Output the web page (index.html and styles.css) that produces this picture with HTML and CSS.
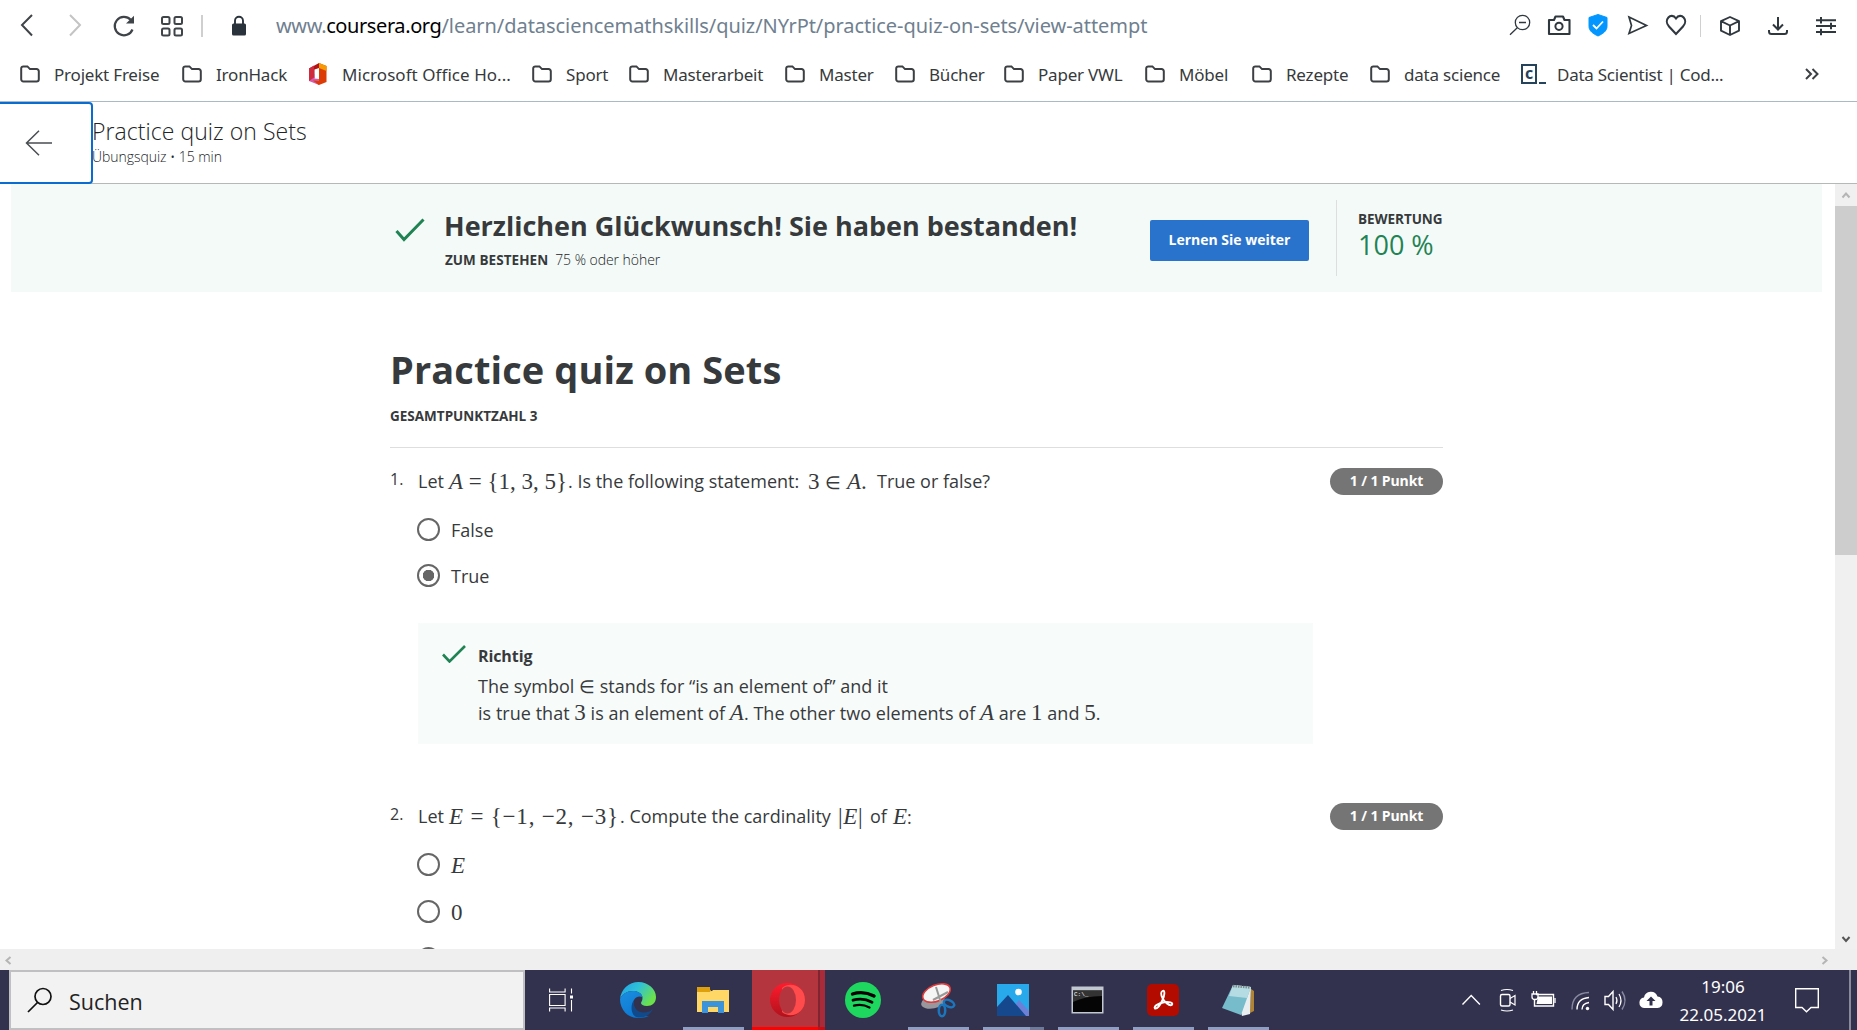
FILE: index.html
```html
<!DOCTYPE html>
<html lang="de">
<head>
<meta charset="utf-8">
<title>Practice quiz on Sets</title>
<link rel="stylesheet" href="styles.css">
</head>
<body>
<svg width="0" height="0" class="defs">
  <defs>
    <symbol id="folder" viewBox="0 0 20 18"><path d="M1.2 3.4a2 2 0 0 1 2-2h4.2l2.6 2.7h6.6a2.2 2.2 0 0 1 2.2 2.2v8a2.2 2.2 0 0 1-2.2 2.2H3.4a2.2 2.2 0 0 1-2.2-2.2z" fill="none" stroke="#3c4043" stroke-width="2"/></symbol>
  </defs>
</svg>

<nav class="toolbar">
  <div class="nav-buttons">
    <svg viewBox="0 0 230 52" width="230" height="52" fill="none" stroke="#3f4448" stroke-width="2">
      <path d="M32 15L22 25l10 10.500"/>
      <path d="M70 15l10 10-10 10.500" stroke="#c4c4c4"/>
      <path d="M132.500 29.500a9.200 9.200 0 1 1-1.800-9.700" stroke-width="2.200"/><path d="M134 15.800v7.800h-8z" fill="#3f4448" stroke="none"/>
      <rect x="162" y="17" width="7.500" height="7" rx="1.500"/><rect x="174.500" y="17" width="7.500" height="7" rx="1.500"/>
      <rect x="162" y="28.500" width="7.500" height="7" rx="1.500"/><rect x="174.500" y="28.500" width="7.500" height="7" rx="1.500"/>
      <path d="M202 15v22" stroke="#cfcfcf"/>
    </svg>
    <svg class="lock" viewBox="0 0 16 20" width="16" height="21"><path d="M4 9V5.200a4 4 0 0 1 8 0V9" fill="none" stroke="#2a333c" stroke-width="1.900"/><rect x="1" y="8" width="14" height="12" rx="1.500" fill="#2a333c"/></svg>
  </div>
  <div class="url"><span>www.</span><span class="host">coursera.org</span><span class="path">/learn/datasciencemathskills/quiz/NYrPt/practice-quiz-on-sets/view-attempt</span></div>
  <svg class="tools" viewBox="1507 0 350 52" width="350" height="52" fill="none" stroke="#30383f" stroke-width="2">
    <g stroke-width="1.300"><circle cx="1522.500" cy="22.500" r="7.200"/><path d="M1517.300 27.700l-7.300 7M1519 22.500h7"/></g>
    <path d="M1549 20h5l1.500-3.500h7.500l1.500 3.500h5v14h-20.500z" stroke-width="2.100" stroke-linejoin="round"/><circle cx="1559" cy="26.300" r="3.600"/>
    <path d="M1598 14.500l9 3v9c0 4.500-4.500 7.500-9 9.500-4.500-2-9-5-9-9.500v-9z" fill="#0496ff" stroke="#0496ff" stroke-width="1"/><path d="M1593 25l3.500 3.500 6.500-7" stroke="#fff" stroke-width="1.800"/>
    <path d="M1629 17l17.500 8.500-17.500 8 2.500-8z" stroke-width="1.700"/>
    <path d="M1676 34l-7-7.500c-6-6.500 2-15 7-8 5-7 13 1.500 7 8z" stroke-width="2.100"/>
    <path d="M1700.500 15v22" stroke="#d0d0d0" stroke-width="1"/>
    <path d="M1730 17l9 4.200v9.500l-9 4.300-9-4.300v-9.500zM1721 21.200l9 4.300 9-4.300M1730 25.500V35" stroke-width="1.900" stroke-linejoin="round"/>
    <path d="M1778 17v12M1773 24.500l5 5 5-5M1769 30v1.500q0 2.500 2.500 2.500h13q2.500 0 2.500-2.500V30"/>
    <path d="M1816 20.200h20M1816 26h20M1816 32h20M1821 17v6.500M1831 22.800v6.500M1821 28.800v6.500"/>
  </svg>
</nav>

<div class="bookmarks">
  <div class="bm"><svg><use href="#folder"/></svg><span>Projekt Freise</span></div>
  <div class="bm"><svg><use href="#folder"/></svg><span>IronHack</span></div>
  <div class="bm office"><svg viewBox="0 0 20 24"><path d="M1 6.500L11 1v5L6.500 7.500v8.500L1 19z" fill="#b31217"/><path d="M1 14l5.500-2v4.500l4.500.5H11v6L1 19z" fill="#d65aa8"/><path d="M1 6.500l5-3v12L1 19z" fill="#cf2a3c"/><path d="M11 1l7.500 3v16L11 23l-6-4.500 6 .5z" fill="#dd3b06"/><path d="M11 1l7.500 3v5L11 6z" fill="#f59a00"/></svg><span>Microsoft Office Ho...</span></div>
  <div class="bm"><svg><use href="#folder"/></svg><span>Sport</span></div>
  <div class="bm"><svg><use href="#folder"/></svg><span>Masterarbeit</span></div>
  <div class="bm"><svg><use href="#folder"/></svg><span>Master</span></div>
  <div class="bm"><svg><use href="#folder"/></svg><span>Bücher</span></div>
  <div class="bm"><svg><use href="#folder"/></svg><span>Paper VWL</span></div>
  <div class="bm"><svg><use href="#folder"/></svg><span>Möbel</span></div>
  <div class="bm"><svg><use href="#folder"/></svg><span>Rezepte</span></div>
  <div class="bm"><svg><use href="#folder"/></svg><span>data science</span></div>
  <div class="bm code"><span class="c-box">c</span><span class="c-line"></span><span>Data Scientist | Cod...</span></div>
  <svg class="more" viewBox="0 0 14 12" fill="none" stroke="#3c4043" stroke-width="2"><path d="M1 1l5 5-5 5M7.500 1l5 5-5 5"/></svg>
</div>

<header class="page-head">
  <div class="back"><svg viewBox="0 0 28 26" width="28" height="26" fill="none" stroke="#4a4e51" stroke-width="1.500"><path d="M27 13H1.500M14 .8L1.500 13 14 25.200"/></svg></div>
  <div class="head-text"><div class="head-title">Practice quiz on Sets</div><div class="head-sub">Übungsquiz • 15 min</div></div>
</header>

<div class="viewport">
  <main class="content">
    <section class="banner">
      <svg class="check-lg" viewBox="0 0 30 24"><path d="M1.500 13l7.500 8.500L28.500 1.500" fill="none" stroke="#1f8354" stroke-width="3"/></svg>
      <div class="pass">
        <div class="pass-title">Herzlichen Glückwunsch! Sie haben bestanden!</div>
        <div class="pass-sub"><b>ZUM BESTEHEN</b><span>75 % oder höher</span></div>
      </div>
      <div class="btn">Lernen Sie weiter</div>
      <div class="grade"><div class="grade-label">BEWERTUNG</div><div class="grade-value">100 %</div></div>
    </section>

    <section class="quiz">
      <h1>Practice quiz on Sets</h1>
      <div class="total">GESAMTPUNKTZAHL 3</div>

      <article class="question q1">
        <div class="num">1.</div>
        <div class="body">
          <p class="prompt"><span class="w1">Let</span><span class="m w2"><i>A</i> = {1, 3, 5}</span><span class="w3">. Is the following statement:</span><span class="m w4">3 <span class="in">∈</span> <i>A</i>.</span><span>True or false?</span></p>
          <div class="opt"><span class="radio"></span><span class="label">False</span></div>
          <div class="opt"><span class="radio on"></span><span class="label">True</span></div>
          <div class="feedback">
            <svg class="check-sm" viewBox="0 0 24 18"><path d="M1 9.500l6.500 7L23 1" fill="none" stroke="#1f8354" stroke-width="2.600"/></svg>
            <div>
              <div class="right">Richtig</div>
              <p>The symbol <span class="m in">∈</span> stands for “is an element of” and it</p>
              <p>is true that <span class="m">3</span> is an element of <i class="m">A</i>. The other two elements of <i class="m">A</i> are <span class="m">1</span> and <span class="m">5</span>.</p>
            </div>
          </div>
        </div>
        <div class="badge">1 / 1 Punkt</div>
      </article>

      <article class="question q2">
        <div class="num">2.</div>
        <div class="body">
          <p class="prompt"><span class="w1">Let</span><span class="m w5"><i>E</i> = {−1, −2, −3}</span><span class="w6">. Compute the cardinality</span><span class="m w7">|<i>E</i>|</span><span class="w8">of</span><span><i class="m">E</i>:</span></p>
          <div class="opt"><span class="radio"></span><i class="m label">E</i></div>
          <div class="opt"><span class="radio"></span><span class="m label">0</span></div>
          <div class="opt"><span class="radio"></span></div>
        </div>
        <div class="badge">1 / 1 Punkt</div>
      </article>
    </section>
  </main>
  <div class="vscroll">
    <svg viewBox="0 0 22 22" width="22" height="22"><path d="M7.500 13.500l3.500-4 3.500 4" fill="none" stroke="#b5b5b5" stroke-width="2"/></svg>
    <div class="thumb"></div>
    <svg viewBox="0 0 22 22" width="22" height="22"><path d="M7.500 10l3.500 4 3.500-4" fill="none" stroke="#555" stroke-width="2"/></svg>
  </div>
</div>
<div class="hscroll">
  <svg viewBox="0 0 22 21" width="22" height="21"><path d="M10.500 8l-4 3.500 4 3.500" fill="none" stroke="#b5b5b5" stroke-width="2"/></svg>
  <svg viewBox="0 0 22 21" width="22" height="21"><path d="M9.500 8l4 3.500-4 3.500" fill="none" stroke="#b5b5b5" stroke-width="2"/></svg>
</div>

<footer class="taskbar">
  <div class="search"><svg viewBox="0 0 26 26" width="26" height="26" fill="none" stroke="#111" stroke-width="1.700"><circle cx="16" cy="9.500" r="8"/><path d="M10.500 15.500L1 25"/></svg><span class="search-text">Suchen</span></div>
  <div class="cell view"><svg viewBox="0 0 24 24" width="24" height="24" fill="none" stroke="#fff" stroke-width="1.100"><path d="M.6.500v3.500h15.500V.500M.6 6.500h15.500v11H.6zM.6 23.500v-3.500h15.500v3.500M22.500.500v5M22.500 12v11.500"/><path d="M21 7.500h3v3h-3z" fill="#fff" stroke="none"/></svg></div>
  <div class="cell">
    <svg viewBox="0 0 36 36" width="36" height="36"><defs><linearGradient id="eg" x2="1" y2=".5"><stop stop-color="#1f9fe8"/><stop offset=".5" stop-color="#2fc2d6"/><stop offset="1" stop-color="#6be14c"/></linearGradient><linearGradient id="eb" x1="0" y1="0" x2=".7" y2="1"><stop stop-color="#1b8ee0"/><stop offset="1" stop-color="#0b76d0"/></linearGradient></defs>
    <path d="M0 17C1 7 9 0 18.500 0 28 0 36 7 36 15c0 6-4 9-9 9-4 0-6-1.500-6-3 0-1 1.500-2 1.500-5 0-4-4-7-9.500-7C7 9 2 12 0 17z" fill="url(#eg)"/><path d="M0 17c2-5 7-8 13-8 5 0 9 2.500 9.500 6-6-2-10 2-9 8 1 7 8 12 15 11-3 1.500-6 2-10.500 2C8 36 0 28 0 17z" fill="url(#eb)"/><path d="M14 18c-1.500 8 4 13.500 11 12.500 3-.3 6-1.500 8-3.500-4 7-10 10-17 8-5-2.500-6-12-2-17z" fill="#114a8b"/></svg>
  </div>
  <div class="cell open"><svg viewBox="0 0 32 26" width="32" height="26"><path d="M0 1h12l2 3h18v21H0z" fill="#fbc940"/><path d="M0 0h13v5H0z" fill="#dfa00d"/><path d="M0 5h14l2-2h16v22H0z" fill="#ffd766"/><path d="M5 26V14h22v12h-6v-6H11v6z" fill="#3b93dc"/></svg></div>
  <div class="cell opera"><svg viewBox="0 0 35 34" width="35" height="34"><defs><linearGradient id="og" x2="0" y2="1"><stop stop-color="#ff1b2d"/><stop offset="1" stop-color="#b0121c"/></linearGradient></defs><ellipse cx="17.500" cy="17" rx="17.500" ry="17" fill="url(#og)"/><path d="M12 5c8-7 23-2 23 12S20 36 12 29z" fill="#ff4b4b"/><ellipse cx="17.500" cy="17" rx="8.500" ry="13.500" fill="#b5353f"/></svg></div>
  <div class="cell"><svg viewBox="0 0 36 36" width="36" height="36"><circle cx="18" cy="18" r="18" fill="#1ed75f"/><g fill="none" stroke="#000" stroke-linecap="round"><path d="M7.500 12q11-3.500 21.500 2" stroke-width="3.400"/><path d="M8 18.200q10-3 19 2" stroke-width="2.800"/><path d="M9 23.700q8-2.200 15.500 1.800" stroke-width="2.300"/></g></svg></div>
  <div class="cell open"><svg viewBox="0 0 36 36" width="36" height="36"><ellipse cx="13" cy="20" rx="12" ry="6.500" fill="#97979d" transform="rotate(-12 13 20)"/><ellipse cx="16.500" cy="11" rx="14.500" ry="8" fill="#f5f5f5" stroke="#df3a3a" stroke-width="1.600" transform="rotate(-22 16.500 11)"/><path d="M16 5l5 16M28 10L13 18" stroke="#999" stroke-width="2"/><g fill="none" stroke="#1b76bd" stroke-width="2.500"><ellipse cx="29" cy="21.500" rx="5.500" ry="3.200" transform="rotate(25 29 21.500)"/><ellipse cx="22" cy="28.500" rx="3.200" ry="5.700"/></g></svg></div>
  <div class="cell open multi"><svg viewBox="0 0 32 32" width="32" height="32"><path d="M0 0h32v32H0z" fill="#27a9ec"/><path d="M10 32l12-16 10 11v5z" fill="#6d80d8"/><path d="M0 23l11-12 18 21H0z" fill="#16488e"/><circle cx="21.500" cy="8" r="3.300" fill="#fff"/></svg></div>
  <div class="cell open"><svg viewBox="0 0 33 28" width="33" height="28"><path d="M.5.500h32v27H.5z" fill="#c2c8d0"/><path d="M2 4.500h29V26H2z" fill="#050505"/><path d="M2 4.500h29V10Q14 10 2 16z" fill="#333"/><text x="3" y="10" class="prompt-text">C:\_</text></svg></div>
  <div class="cell open"><svg viewBox="0 0 32 32" width="32" height="32"><rect width="32" height="32" rx="5" fill="#b30b00"/><path d="M15.500 7c3-1.500 2 5 0 9-2 4.500-5 9-7.500 8.500-2-2 4-5.500 9-6.300 5-.8 9.500.5 8 2.500-2.500 2-8-3-9.500-6.500C14.300 11.500 13.500 8 15.500 7z" fill="none" stroke="#fff" stroke-width="1.900"/></svg></div>
  <div class="cell open"><svg viewBox="0 0 34 32" width="34" height="32"><path d="M30 5l3 2v20l-4 2z" fill="#b18432"/><path d="M12 1l18 2-1 27-8 2z" fill="#e8eef0"/><path d="M12 1l18 2-10 28L1 24z" fill="#76bccb"/><path d="M12 1l18 2-4 11-18-2z" fill="#b5dce2"/><path d="M12 2l17 1.500" stroke="#7d8a8c" stroke-width="2.500" stroke-dasharray="1.500 1"/></svg></div>
  <svg class="tray" viewBox="1450 970 220 60" width="220" height="60" fill="none" stroke="#fff" stroke-width="1.400">
    <path d="M1462.500 1004.500l8.700-9 8.700 9"/>
    <rect x="1500.500" y="994.500" width="9.500" height="11.500" rx="1.500"/><path d="M1510 998.500l5-3v9.500l-5-3M1501 990.500q6-2 12 0M1501 1010q6 2 12 0" stroke-width="1.200"/>
    <path d="M1536 994.500h17.500v11.500h-19v-6" /><path d="M1538 996.500h14v7.500h-15.500z" fill="#fff" stroke="none"/><path d="M1555 998v5M1532 994h6v3q0 2.500-3 2.500t-3-2.500zM1533.500 991v3M1536.500 991v3" stroke-width="1.300"/>
    <circle cx="1587.500" cy="1008.500" r="1.700" fill="#fff" stroke="none"/><path d="M1582 1009.500q0-6 7-7M1577 1009.500q0-11 12-12"/><path d="M1572 1009.500q0-16.500 17-17" stroke="#8888a0"/>
    <path d="M1605 996.500h3.500l4.500-5v18l-4.500-5h-3.500z"/><path d="M1616 997q2 3.500 0 7M1619 994q4 6.500 0 13" stroke-width="1.200"/><path d="M1622 991.500q6 9 0 18" stroke="#8888a0"/>
    <path d="M1644 1008a5.300 5.300 0 0 1 0-10.500 7 7 0 0 1 13.500-1 5.800 5.800 0 0 1 0 11.500z" fill="#fff" stroke="none"/><path d="M1651 996.500l4.500 4.500h-3v4.500h-3v-4.500h-3z" fill="#33324e" stroke="none"/>
  </svg>
  <div class="clock"><span>19:06</span><span>22.05.2021</span></div>
  <svg class="note" viewBox="0 0 24 25" width="24" height="25" fill="none" stroke="#fff" stroke-width="1.400"><path d="M.7.700h22.600v18.800H16l-4.500 4.300L7 19.500H.7z"/></svg>
  <div class="desk"></div>
</footer>
</body>
</html>
```
FILE: styles.css
```css
* { box-sizing: border-box; }
body {
  margin: 0;
  width: 1857px;
  height: 1030px;
  overflow: hidden;
  background: #fff;
  color: #373a3c;
  font-family: "Open Sans", "Noto Sans", sans-serif;
  display: flex;
  flex-direction: column;
  white-space: nowrap;
}
svg { display: block; flex: none; }
p, h1 { margin: 0; }
.defs { position: absolute; }

/* Browser toolbar */
.toolbar { height: 52px; display: flex; align-items: center; }
.nav-buttons { width: 276px; display: flex; align-items: center; gap: 1px; flex: none; }
.lock { margin-bottom: 2px; }
.url { flex: 1; font-family: "Noto Sans", sans-serif; font-size: 20px; line-height: 50px; color: #6f8090; letter-spacing: -0.4px; }
.url .host { color: #000; }
.url .path { letter-spacing: -0.05px; }
.bookmarks {
  height: 50px;
  padding: 0 0 5px 20px;
  border-bottom: 1px solid #a9bac6;
  display: grid;
  grid-template-columns: 162px 127px 223px 97px 156px 110px 109px 141px 107px 118px 151px 284px 14px;
  align-items: center;
  font-family: "Noto Sans", sans-serif;
  font-size: 17px;
  letter-spacing: -0.2px;
}
.bm { display: flex; align-items: center; }
.bm svg { width: 20px; height: 18px; margin-right: 14px; }
.office { letter-spacing: 0.05px; }
.office svg { height: 24px; margin-right: 14px; margin-left: -1px; }
.code { letter-spacing: -0.25px; }
.c-box { width: 16px; height: 20px; border: 2px solid #25435a; font: bold 16px/15px "Open Sans", sans-serif; text-align: center; color: #25435a; }
.c-line { width: 7px; height: 2px; margin: 17px 11px 0 2px; background: #25435a; }
.more { width: 14px; height: 12px; }

/* Quiz header */
.page-head { height: 82px; display: flex; border-bottom: 1px solid #b4b9b8; }
.back { width: 93px; height: 82px; border: 2px solid #0a6cd0; border-left: 0; border-radius: 0 4px 4px 0; padding: 26px 0 0 25px; }
.head-text { padding-top: 13px; margin-left: -1px; }
.head-title { font-size: 23px; line-height: 32px; font-weight: 300; color: #222527; letter-spacing: 0.05px; }
.head-sub { font-size: 14px; line-height: 19px; font-weight: 300; color: #222527; letter-spacing: -0.05px; }

/* Scrolled page */
.viewport { height: 765px; display: flex; overflow: hidden; }
.content { width: 1835px; padding: 0 13px 0 11px; overflow: hidden; }
.banner { height: 108px; background: #f4faf8; padding-left: 384px; display: flex; }
.check-lg { width: 30px; height: 24px; margin: 34px 19px 0 0; }
.pass { width: 706px; padding-top: 23px; }
.pass-title { font-size: 27px; line-height: 38px; font-weight: 700; letter-spacing: -0.02px; }
.pass-sub { font-size: 14px; line-height: 30px; display: flex; gap: 7px; font-weight: 300; padding-left: 1px; letter-spacing: -0.05px; color: #222527; }
.pass-sub b { font-weight: 700; font-size: 13.500px; letter-spacing: 0.05px; color: #373a3c; }
.btn { width: 159px; height: 41px; margin-top: 36px; border-radius: 2px; background: #2a73cc; color: #fff; font-size: 14px; line-height: 40px; font-weight: 700; text-align: center; }
.grade { margin: 16px 0 0 27px; height: 76px; border-left: 1px solid #dcdfde; padding: 9px 0 0 21px; }
.grade-label { font-size: 13.500px; line-height: 20px; font-weight: 700; letter-spacing: -0.05px; }
.grade-value { font-size: 27px; line-height: 31px; color: #1f8354; }
.quiz { width: 1053px; margin-left: 379px; }
h1 { font-size: 38px; line-height: 52px; font-weight: 700; padding-top: 51px; letter-spacing: 0.08px; }
.total { font-size: 13.500px; line-height: 20px; font-weight: 700; margin-top: 11px; height: 42px; }
.question { display: flex; align-items: flex-start; font-size: 18px; font-weight: 400; }
.q1 { border-top: 1px solid #dedede; height: 336px; margin-top: -1px; }
.num { width: 28px; font-size: 16px; line-height: 22px; padding-top: 20px; }
.body { width: 912px; }
.prompt { display: flex; line-height: 27px; padding-top: 20px; height: 58px; }
.m { font-family: "Liberation Serif", serif; font-size: 23px; line-height: 20px; }
.prompt .m { line-height: 27px; }
.in { font-size: 18px; }
.opt { display: flex; align-items: center; height: 46px; gap: 11px; margin-left: -1px; }
.opt .label { padding-top: 2px; }
.q2 .opt { height: 47px; }
.radio { width: 23px; height: 23px; border: 2px solid #666; border-radius: 50%; flex: none; }
.radio.on { background: radial-gradient(circle, #666 5.500px, transparent 6px); }
.feedback { width: 895px; height: 121px; margin-top: 25px; background: #f7fbfa; padding: 20px 0 0 24px; display: flex; gap: 37px; line-height: 27px; }
.feedback p { height: 27px; margin-top: 3px; }
.feedback p + p { margin-top: 0; letter-spacing: 0.03px; }
.check-sm { width: 24px; height: 18px; margin: 2px -24px 0 0; }
.feedback .check-sm { margin-right: -1px; }
.feedback { gap: 13px; }
.feedback .right { font-size: 16px; font-weight: 700; letter-spacing: -0.1px; }
.badge { width: 113px; height: 27px; margin-top: 20px; border-radius: 13.500px; background: #757575; color: #fff; font-size: 14px; line-height: 26px; font-weight: 700; text-align: center; letter-spacing: -0.1px; }
.w1 { width: 31px; }
.w2 { width: 119px; }
.w3 { width: 240px; }
.w4 { width: 69px; }
.w5 { width: 171px; letter-spacing: 0.8px; }
.w6 { width: 218px; }
.w7 { width: 32px; letter-spacing: 0.6px; }
.w8 { width: 23px; }

.vscroll { width: 22px; background: #f0f0f0; display: flex; flex-direction: column; }
.thumb { height: 349px; background: #cdcdcd; margin-bottom: auto; }
.hscroll { height: 21px; background: #efefef; display: flex; justify-content: space-between; padding-right: 22px; flex: none; }

/* Taskbar */
.taskbar { height: 60px; background: #33324e; display: flex; align-items: center; padding-left: 9px; color: #fff; flex: none; }
.search { width: 516px; height: 60px; background: #f2f2f2; border: 2px solid #c0c0c2; color: #222; display: flex; align-items: center; gap: 16px; padding-left: 16px; font-size: 21.500px; }
.search-text { padding-top: 3px; }
.cell { width: 75px; height: 60px; display: flex; align-items: center; justify-content: center; border: solid transparent; border-width: 0 6px 0 8px; padding-right: 2px; flex: none; }
.view { width: 75px; border: 0; padding-right: 3px; }
.open { background: linear-gradient(#8f9fc4, #8f9fc4) bottom / 100% 3px no-repeat; }
.multi { background: linear-gradient(90deg, #8f9fc4 47px, #6e7a9a 47px) bottom / 100% 3px no-repeat; }
.opera { border: 0; width: 73px; margin: 0 0 0 2px; background: linear-gradient(90deg, #ff0000 66px, #cc0a12 66px) bottom / 100% 3px no-repeat, linear-gradient(90deg, #b5353f 66px, #7f2431 66px, #7f2431 68px, #a92b39 68px); }
.prompt-text { font: 6px "Liberation Mono", monospace; fill: #fff; }
.tray { margin-left: 175px; }
.clock { width: 106px; display: flex; flex-direction: column; align-items: center; font-family: "Noto Sans", sans-serif; font-size: 17px; line-height: 28px; padding-top: 2px; }
.note { margin-left: 19px; margin-top: 1px; }
.desk { width: 2px; height: 60px; margin-left: auto; margin-right: 6px; background: #8b8a9b; }
```
